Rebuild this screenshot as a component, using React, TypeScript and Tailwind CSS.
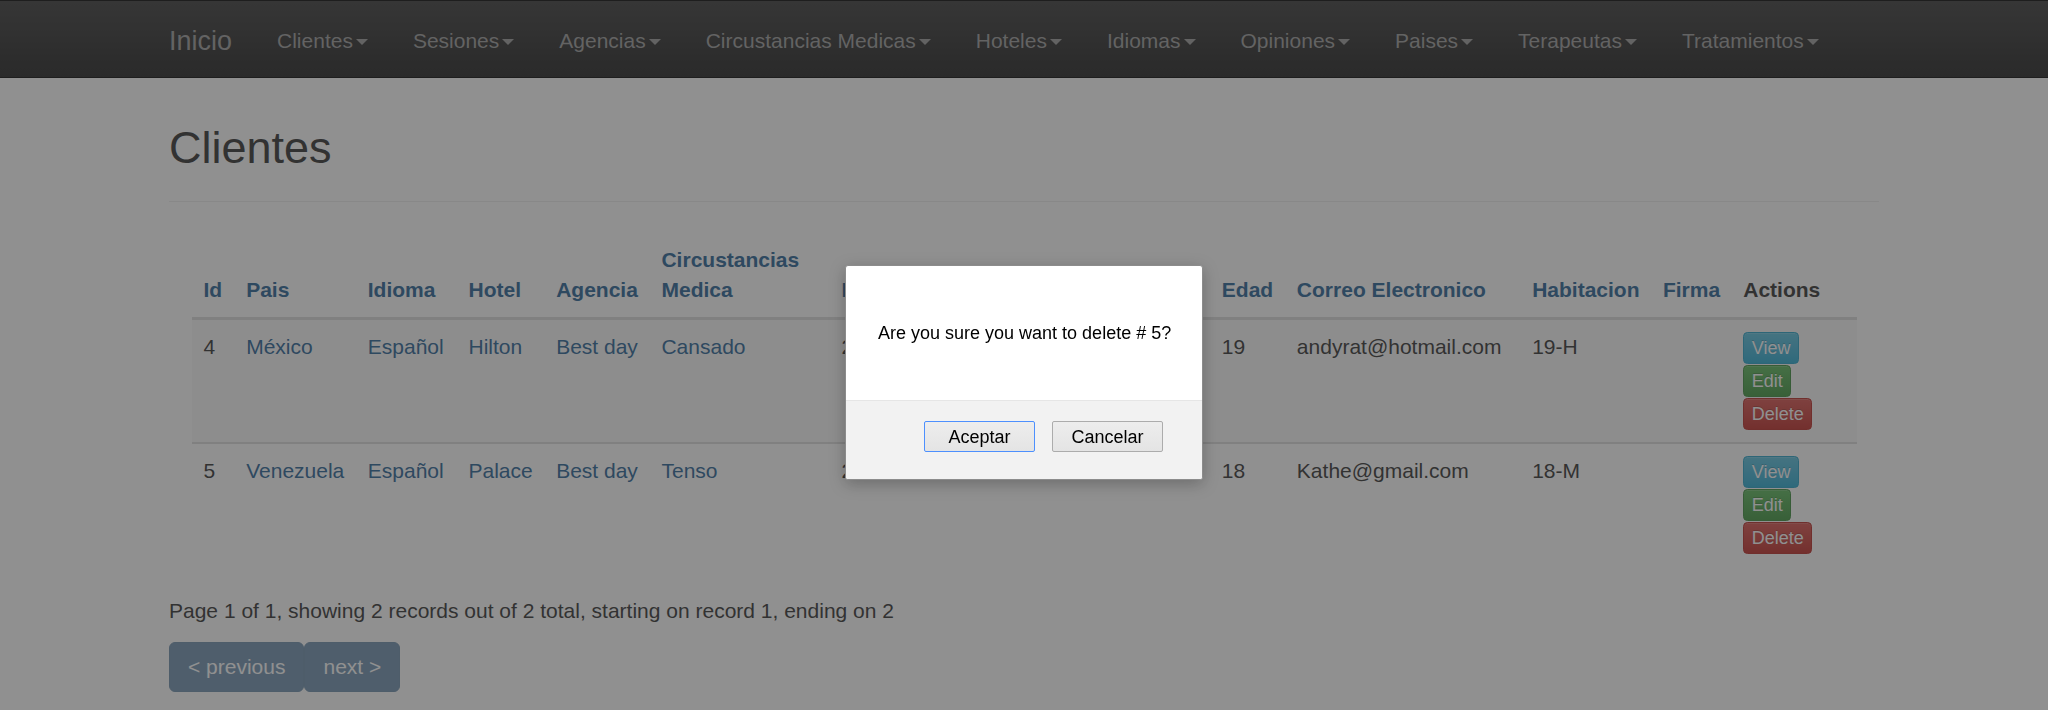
import React from 'react';

// Bootstrap 3 + theme admin page (rendered at 150%) with a native confirm dialog on top

const navItems = [
  'Clientes',
  'Sesiones',
  'Agencias',
  'Circustancias Medicas',
  'Hoteles',
  'Idiomas',
  'Opiniones',
  'Paises',
  'Terapeutas',
  'Tratamientos',
];

const columns = [
  { label: 'Id', width: 'w-[42.7px]', link: true },
  { label: 'Pais', width: 'w-[121.6px]', link: true },
  { label: 'Idioma', width: 'w-[100.7px]', link: true },
  { label: 'Hotel', width: 'w-[87.7px]', link: true },
  { label: 'Agencia', width: 'w-[105.3px]', link: true },
  { label: 'Circustancias Medica', width: 'w-[180px]', link: true },
  { label: 'Fecha Registro', width: 'w-[380.4px]', link: true },
  { label: 'Edad', width: 'w-[75px]', link: true },
  { label: 'Correo Electronico', width: 'w-[235.3px]', link: true },
  { label: 'Habitacion', width: 'w-[130.8px]', link: true },
  { label: 'Firma', width: 'w-[80.3px]', link: true },
  { label: 'Actions', width: 'w-[125.2px]', link: false },
];

const clientes = [
  {
    id: 4,
    pais: 'México',
    idioma: 'Español',
    hotel: 'Hilton',
    agencia: 'Best day',
    circunstancia: 'Cansado',
    fecha: '2015-06-10',
    edad: 19,
    correo: 'andyrat@hotmail.com',
    habitacion: '19-H',
    firma: '',
  },
  {
    id: 5,
    pais: 'Venezuela',
    idioma: 'Español',
    hotel: 'Palace',
    agencia: 'Best day',
    circunstancia: 'Tenso',
    fecha: '2015-06-11',
    edad: 18,
    correo: 'Kathe@gmail.com',
    habitacion: '18-M',
    firma: '',
  },
];

const Caret = () => (
  <span className="inline-block w-0 h-0 ml-[3px] align-middle border-t-[6px] border-x-[6px] border-t-current border-x-transparent" />
);

const Navbar = () => (
  <nav className="border-t border-b border-[#080808] bg-linear-to-b from-[#3c3c3c] to-[#222222]">
    <div className="w-[1755px] mx-auto px-[22.5px] flex">
      <a className="-ml-[22.5px] px-[22.5px] pt-[25px] pb-[20.5px] h-[75.5px] text-[27px] leading-[30px] text-[#9d9d9d]">
        Inicio
      </a>
      <ul className="flex">
        {navItems.map((item) => (
          <li key={item}>
            <a className="block px-[22.5px] pt-[25px] pb-[20.5px] text-[21px] leading-[30px] text-[#9d9d9d]">
              {item}
              <Caret />
            </a>
          </li>
        ))}
      </ul>
    </div>
  </nav>
);

const ActionButtons = () => (
  <div className="flex flex-col items-start gap-[1px]">
    <a className="h-[32px] px-[7.5px] text-[18px] leading-[30px] text-white rounded-[4.5px] border border-[#28a4c9] bg-linear-to-b from-[#5bc0de] to-[#2aabd2] shadow-[inset_0_1px_0_rgba(255,255,255,0.15)] [text-shadow:0_-1px_0_rgba(0,0,0,0.2)]">
      View
    </a>
    <a className="h-[32px] px-[7.5px] text-[18px] leading-[30px] text-white rounded-[4.5px] border border-[#3e8f3e] bg-linear-to-b from-[#5cb85c] to-[#419641] shadow-[inset_0_1px_0_rgba(255,255,255,0.15)] [text-shadow:0_-1px_0_rgba(0,0,0,0.2)]">
      Edit
    </a>
    <a className="h-[32px] px-[7.5px] text-[18px] leading-[30px] text-white rounded-[4.5px] border border-[#b92c28] bg-linear-to-b from-[#d9534f] to-[#c12e2a] shadow-[inset_0_1px_0_rgba(255,255,255,0.15)] [text-shadow:0_-1px_0_rgba(0,0,0,0.2)]">
      Delete
    </a>
  </div>
);

const ClientesTable = () => (
  <div className="px-[22.5px]">
    <table className="w-full table-fixed mb-[30px]">
      <thead>
        <tr>
          {columns.map((col) => (
            <th
              key={col.label}
              className={`${col.width} p-[12px] text-left align-bottom font-bold leading-[30px] border-b-[3px] border-[#dddddd] ${
                col.link ? 'text-[#2a6496]' : 'text-[#333333]'
              }`}
            >
              {col.label}
            </th>
          ))}
        </tr>
      </thead>
      <tbody>
        {clientes.map((c, index) => (
          <tr key={c.id} className={index % 2 === 0 ? 'bg-[#f9f9f9]' : ''}>
            <td className="p-[12px] align-top border-t-2 border-[#dddddd]">{c.id}</td>
            <td className="p-[12px] align-top border-t-2 border-[#dddddd] text-[#2a6496] whitespace-nowrap">{c.pais}</td>
            <td className="p-[12px] align-top border-t-2 border-[#dddddd] text-[#2a6496]">{c.idioma}</td>
            <td className="p-[12px] align-top border-t-2 border-[#dddddd] text-[#2a6496]">{c.hotel}</td>
            <td className="p-[12px] align-top border-t-2 border-[#dddddd] text-[#2a6496] whitespace-nowrap">{c.agencia}</td>
            <td className="p-[12px] align-top border-t-2 border-[#dddddd] text-[#2a6496]">{c.circunstancia}</td>
            <td className="p-[12px] align-top border-t-2 border-[#dddddd]">{c.fecha}</td>
            <td className="p-[12px] align-top border-t-2 border-[#dddddd]">{c.edad}</td>
            <td className="p-[12px] align-top border-t-2 border-[#dddddd]">{c.correo}</td>
            <td className="p-[12px] align-top border-t-2 border-[#dddddd]">{c.habitacion}</td>
            <td className="p-[12px] align-top border-t-2 border-[#dddddd]">{c.firma}</td>
            <td className="p-[12px] align-top border-t-2 border-[#dddddd]">
              <ActionButtons />
            </td>
          </tr>
        ))}
      </tbody>
    </table>
  </div>
);

const ConfirmDialog = () => (
  <div className="fixed left-1/2 -translate-x-1/2 top-[265px] w-[358px] h-[215px] flex flex-col bg-white border border-[#8c8c8c] rounded-[3px] shadow-[0_4px_16px_rgba(0,0,0,0.25)] overflow-hidden font-['Liberation_Sans',Arial,sans-serif] text-black">
    <div className="h-[134px] flex items-center pl-[32px] text-[18px] leading-[22px]">
      Are you sure you want to delete # 5?
    </div>
    <div className="flex-1 flex justify-end items-start gap-[17px] pt-[20px] pr-[39px] bg-[#f2f2f2] border-t border-[#e6e6e6]">
      <button className="w-[111px] h-[31px] text-[18px] text-black rounded-[2px] border border-[#4d90fe] bg-linear-to-b from-[#ededed] to-[#e4e4e4]">
        Aceptar
      </button>
      <button className="w-[111px] h-[31px] text-[18px] text-black rounded-[2px] border border-[#acacac] bg-linear-to-b from-[#ededed] to-[#e4e4e4]">
        Cancelar
      </button>
    </div>
  </div>
);

export default function App() {
  return (
    <div className="min-h-screen bg-white text-[#333333] text-[21px] leading-[30px] font-['Liberation_Sans',Arial,sans-serif]">
      {/* Navigation */}
      <Navbar />

      {/* Content */}
      <div className="w-[1755px] mx-auto px-[22.5px] pt-[45px]">
        <div className="pb-[13.5px] mb-[31.5px] border-b border-[#eeeeee]">
          <h2 className="text-[45px] leading-[1.1] mb-[15px]">Clientes</h2>
        </div>

        <ClientesTable />

        <p className="mb-[16px]">
          Page 1 of 1, showing 2 records out of 2 total, starting on record 1, ending on 2
        </p>
        <div className="flex">
          <a className="px-[18px] py-[9px] leading-[30px] text-white bg-[#265a88] border border-[#245580] rounded-[6px] opacity-65">
            &lt; previous
          </a>
          <a className="px-[18px] py-[9px] leading-[30px] text-white bg-[#265a88] border border-[#245580] rounded-[6px] opacity-65">
            next &gt;
          </a>
        </div>
      </div>

      {/* Dimmed backdrop + native-style confirm */}
      <div className="fixed inset-0 bg-[rgba(49,49,49,0.54)]" />
      <ConfirmDialog />
    </div>
  );
}
